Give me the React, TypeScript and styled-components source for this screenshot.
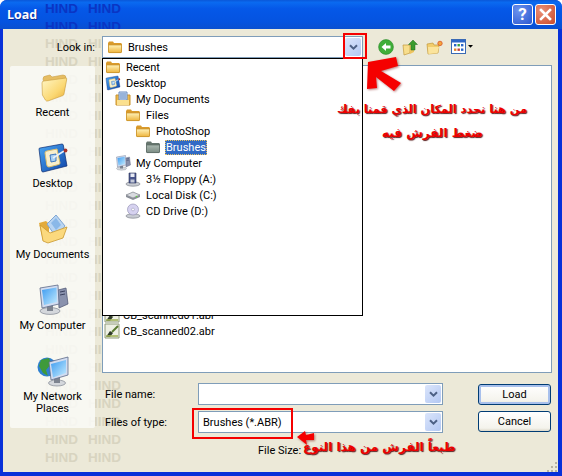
import React from 'react'
import styled, { createGlobalStyle } from 'styled-components'

const GlobalStyle = createGlobalStyle`
  html, body {
    margin: 0;
    padding: 0;
    background: #fff;
  }
  body {
    font-family: Roboto, 'Liberation Sans', Arial, sans-serif;
    font-size: 11px;
    color: #000;
  }
`

const FolderIcon = ({ size = 16, muted = false }: { size?: number; muted?: boolean }) => {
  const id = muted ? 'folderMuted' : 'folderGold'
  return (
    <svg width={size} height={size} viewBox="0 0 16 16">
      <defs>
        <linearGradient id={id} x1="0" y1="0" x2="0" y2="1">
          <stop offset="0" stopColor={muted ? '#aab8b0' : '#fff2b8'} />
          <stop offset="1" stopColor={muted ? '#7c8c84' : '#eeb53e'} />
        </linearGradient>
      </defs>
      <path d="M1 4 L2 2.5 H6 L7 4 H14 L15 5 V13 L14 14 H2 L1 13 Z" fill={muted ? '#66756e' : '#d99a2b'} />
      <path d="M1.5 6 H14.5 V13 L14 13.6 H2 L1.5 13 Z" fill={`url(#${id})`} stroke={muted ? '#5d6b65' : '#c9932e'} strokeWidth=".7" />
    </svg>
  )
}

const BigFolderIcon = () => (
  <svg width="32" height="32" viewBox="0 0 32 32">
    <defs>
      <linearGradient id="bigFolder" x1="0" y1="0" x2="1" y2="1">
        <stop offset="0" stopColor="#fff7c8" />
        <stop offset=".6" stopColor="#fbd873" />
        <stop offset="1" stopColor="#e8ab36" />
      </linearGradient>
    </defs>
    <path d="M6 8 Q6 5 9 5 L13 4 L15 6 L26 4 Q29 4 29 7 L27 20 L10 28 Z" fill="#e6bd62" stroke="#c9a048" strokeWidth=".6" />
    <path d="M5 12 Q5 10 7 10 L29 7 Q30 7 29.6 9 L27 23 Q26.8 24 26 24.5 L11 30 Q9 30.4 8.4 29 L5.4 24 Z" fill="url(#bigFolder)" stroke="#c79a3c" strokeWidth=".6" />
  </svg>
)

const DesktopIcon = ({ size = 32 }: { size?: number }) => (
  <svg width={size} height={size} viewBox="0 0 32 32">
    <defs>
      <linearGradient id={`desk${size}`} x1="0" y1="0" x2="1" y2="1">
        <stop offset="0" stopColor="#4aa8f4" />
        <stop offset="1" stopColor="#0f44a8" />
      </linearGradient>
    </defs>
    <path d="M2 7 Q2 6 3 6 L25 2 Q26 2 26.3 3 L30 24 L6 30 Q5 30 4.7 29 Z" fill={`url(#desk${size})`} stroke="#0b2a70" strokeWidth=".7" />
    <path d="M8 11 Q8 9 10 9 L20 7 L23 21 Q23 22 22 22.4 L12 25 Q10 25 9.8 23 Z" fill="#f8efcc" stroke="#dcbf6c" />
    <path d="M13 13 L19 12 L19 19 L14 20 Z" fill="#a8d0f2" stroke="#1c5fb8" strokeWidth=".8" />
    <path d="M16 16 L27 9" stroke="#e8f1fb" strokeWidth="1.5" />
    <circle cx="28.5" cy="8.5" r="1.9" fill="#a8322a" />
  </svg>
)

const DocsIcon = ({ size = 32 }: { size?: number }) => (
  <svg width={size} height={size} viewBox="0 0 32 32">
    <path d="M2 10 L9 8 L12 11 L12 26 L6 28 Z" fill="#e3ab3c" />
    <path d="M10 11 L19 2 L28 13 L19 24 Z" fill="#b9d5f2" stroke="#7fa6d4" />
    <path d="M14 10 L19 5 L24 12 L19 17 Z" fill="#8ab8e8" />
    <path d="M3 12 L13 20 L30 14 L26 25 L11 30 L6 28 Z" fill="#fbd97e" stroke="#c9982f" strokeWidth=".8" />
  </svg>
)

const SmallDocsIcon = () => (
  <svg width="16" height="16" viewBox="0 0 16 16">
    <path d="M1 4 H15 V14 H1 Z" fill="#eeb94d" stroke="#c9932e" />
    <path d="M4 1 H12 V9 H4 Z" fill="#d6e4f6" stroke="#6a8cc0" />
    <path d="M5 3 H11 M5 5 H11 M5 7 H11" stroke="#5b82bc" />
    <path d="M2 9 H14 V14 H2 Z" fill="#fbe08f" />
  </svg>
)

const ComputerIcon = ({ size = 32 }: { size?: number }) => (
  <svg width={size} height={size} viewBox="0 0 32 32">
    <defs>
      <linearGradient id={`screen${size}`} x1="0" y1="0" x2="1" y2="1">
        <stop offset="0" stopColor="#3d9bf0" />
        <stop offset="1" stopColor="#c4ecff" />
      </linearGradient>
    </defs>
    <ellipse cx="13" cy="27" rx="10" ry="3.4" fill="#d4d7dc" stroke="#7f8590" strokeWidth=".7" />
    <path d="M10 21 H16 V27 H10 Z" fill="#7d838f" />
    <path d="M21 6 L29 4 L31 20 L22 24 Z" fill="#8a92ad" stroke="#4a5170" strokeWidth=".7" />
    <path d="M23 8 L28 7 M23 11 L28 10" stroke="#39405e" />
    <path d="M3 4 L21 1 L22 20 L5 24 Z" fill="#d2dcf0" stroke="#5d6a88" strokeWidth=".8" />
    <path d="M5 6 L19.5 3.5 L20 18 L7 21 Z" fill={`url(#screen${size})`} />
  </svg>
)

const NetworkIcon = () => (
  <svg width="32" height="32" viewBox="0 0 32 32">
    <defs>
      <linearGradient id="netScreen" x1="0" y1="0" x2="1" y2="1">
        <stop offset="0" stopColor="#3d9bf0" />
        <stop offset="1" stopColor="#c4ecff" />
      </linearGradient>
    </defs>
    <circle cx="10" cy="12" r="9.5" fill="#2e80d0" />
    <path d="M4 5 L12 3 L14 9 L9 15 L11 21 L6 18 L2 11 Z" fill="#3f9a3a" />
    <ellipse cx="20" cy="28" rx="8.5" ry="3" fill="#d4d7dc" stroke="#7f8590" strokeWidth=".7" />
    <path d="M17 22 H23 V28 H17 Z" fill="#7d838f" />
    <path d="M12 7 L31 2 L31 20 L14 25 Z" fill="#d2dcf0" stroke="#5d6a88" strokeWidth=".8" />
    <path d="M14 9 L29 5 L29 18 L16 22.5 Z" fill="url(#netScreen)" />
  </svg>
)

const FloppyIcon = () => (
  <svg width="16" height="16" viewBox="0 0 16 16">
    <ellipse cx="8" cy="13" rx="7" ry="2.2" fill="#c8cbd2" stroke="#70757f" strokeWidth=".6" />
    <path d="M4 2 H11 V12 H4 Z" fill="#49558c" stroke="#2a3258" strokeWidth=".6" />
    <path d="M5.5 2.5 H9.5 V6 H5.5 Z" fill="#e8ebf4" />
    <path d="M5.5 8.5 H9.5 V11.5 H5.5 Z" fill="#c4c9d8" />
  </svg>
)

const DiskIcon = () => (
  <svg width="16" height="16" viewBox="0 0 16 16">
    <path d="M1 8 L8 5 L15 8 L8 11 Z" fill="#d9dbe0" stroke="#6c7079" strokeWidth=".6" />
    <path d="M1 8 V10 L8 13 L15 10 V8 L8 11 Z" fill="#8a8e97" />
    <circle cx="11.5" cy="9.6" r=".8" fill="#60d040" />
  </svg>
)

const CdIcon = () => (
  <svg width="16" height="16" viewBox="0 0 16 16">
    <ellipse cx="8" cy="13" rx="7" ry="2.2" fill="#c8cbd2" stroke="#70757f" strokeWidth=".6" />
    <circle cx="8" cy="6.5" r="5.5" fill="#d6d2f0" stroke="#8b88ad" strokeWidth=".6" />
    <circle cx="8" cy="6.5" r="1.4" fill="#fff" stroke="#8b88ad" strokeWidth=".5" />
  </svg>
)

const BrushFileIcon = () => (
  <svg width="16" height="16" viewBox="0 0 16 16">
    <path d="M1 1 H15 V15 H1 Z" fill="#eef0e4" stroke="#8e9a78" />
    <path d="M2 14 L6 8 L9 10 L6 14 Z" fill="#2e3a28" />
    <path d="M8 9 L14 3" stroke="#5a7a30" strokeWidth="2" />
    <path d="M2 12 H14 V14 H2 Z" fill="#a3b45a" opacity=".8" />
  </svg>
)

const ComboArrow = () => (
  <svg width="9" height="7" viewBox="0 0 9 7">
    <path d="M1 1.2 L4.5 4.6 L8 1.2" fill="none" stroke="#4d6185" strokeWidth="2" />
  </svg>
)

const BackIcon = () => (
  <svg width="16" height="16" viewBox="0 0 16 16">
    <circle cx="8" cy="8" r="7.4" fill="#3fae38" stroke="#2c8a2a" strokeWidth=".6" />
    <path d="M3.5 8 L8 4 V6.5 H12.5 V9.5 H8 V12 Z" fill="#fff" />
  </svg>
)

const UpIcon = () => (
  <svg width="16" height="17" viewBox="0 0 16 17">
    <path d="M1 6 H8 V14 L2 16 Z" fill="#f8de8c" stroke="#c39a3e" strokeWidth=".7" />
    <path d="M8 6 L12 5 V13 L8 15 Z" fill="#eec45f" />
    <path d="M11 1 L15.5 5.5 H13 V11 H9 V5.5 H6.5 Z" fill="#3a9b2e" stroke="#1f6d1c" strokeWidth=".5" />
  </svg>
)

const NewFolderIcon = () => (
  <svg width="17" height="15" viewBox="0 0 17 15">
    <path d="M1 4 L7 3 L8 5 H13 L12 13 L2 14 Z" fill="#f2cd6c" stroke="#c39a3e" strokeWidth=".7" />
    <path d="M2 7 H13 L11.5 13 L2.5 14 Z" fill="#fbe49c" />
    <circle cx="14" cy="3.4" r="2.2" fill="#f4a63a" stroke="#d8542a" strokeWidth=".8" />
  </svg>
)

const ViewsIcon = () => (
  <svg width="23" height="16" viewBox="0 0 23 16">
    <rect x=".5" y=".5" width="14" height="14" fill="#fff" stroke="#3a6ab4" />
    <rect x="1" y="1" width="13" height="2.5" fill="#2f68c8" />
    <rect x="3" y="5" width="2.4" height="2.4" fill="#2a66c8" />
    <rect x="6.5" y="5" width="2.4" height="2.4" fill="#3aa040" />
    <rect x="10" y="5" width="2.4" height="2.4" fill="#2a66c8" />
    <rect x="3" y="9.5" width="2.4" height="2.4" fill="#e0862a" />
    <rect x="6.5" y="9.5" width="2.4" height="2.4" fill="#c84038" />
    <rect x="10" y="9.5" width="2.4" height="2.4" fill="#2a66c8" />
    <path d="M17 6 H22 L19.5 8.8 Z" fill="#000" />
  </svg>
)

const HINDS = Array.from({ length: 52 })

const Watermark = ({ rows, tone }: { rows: number; tone: 'title' | 'body' }) => (
  <S.Watermark $tone={tone}>
    {HINDS.slice(0, rows * 2).map((_, i) => (
      <span key={i}>HIND</span>
    ))}
  </S.Watermark>
)

const places = [
  { label: 'Recent', icon: <BigFolderIcon /> },
  { label: 'Desktop', icon: <DesktopIcon /> },
  { label: 'My Documents', icon: <DocsIcon /> },
  { label: 'My Computer', icon: <ComputerIcon /> },
  { label: 'My Network Places', icon: <NetworkIcon /> }
]

const tree = [
  { label: 'Recent', depth: 0, icon: <FolderIcon /> },
  { label: 'Desktop', depth: 0, icon: <DesktopIcon size={16} /> },
  { label: 'My Documents', depth: 1, icon: <SmallDocsIcon /> },
  { label: 'Files', depth: 2, icon: <FolderIcon /> },
  { label: 'PhotoShop', depth: 3, icon: <FolderIcon /> },
  { label: 'Brushes', depth: 4, icon: <FolderIcon muted />, selected: true },
  { label: 'My Computer', depth: 1, icon: <ComputerIcon size={16} /> },
  { label: '3½ Floppy (A:)', depth: 2, icon: <FloppyIcon /> },
  { label: 'Local Disk (C:)', depth: 2, icon: <DiskIcon /> },
  { label: 'CD Drive (D:)', depth: 2, icon: <CdIcon /> }
]

export default function App() {
  return (
    <S.Window>
      <GlobalStyle />
      <S.TitleBar>
        <Watermark rows={2} tone="title" />
        <S.Title>Load</S.Title>
        <S.TitleButtons>
          <S.HelpButton>?</S.HelpButton>
          <S.CloseButton>
            <svg width="13" height="13" viewBox="0 0 13 13">
              <path d="M2 2 L11 11 M11 2 L2 11" stroke="#fff" strokeWidth="2.6" strokeLinecap="square" />
            </svg>
          </S.CloseButton>
        </S.TitleButtons>
      </S.TitleBar>

      <S.Body>
        <Watermark rows={24} tone="body" />
        <S.TopRow>
          <S.LookInLabel>Look in:</S.LookInLabel>
          <S.Combo $width={261}>
            <FolderIcon />
            <span>Brushes</span>
            <S.ComboButton>
              <ComboArrow />
            </S.ComboButton>
          </S.Combo>
          <S.Toolbar>
            <BackIcon />
            <UpIcon />
            <NewFolderIcon />
            <ViewsIcon />
          </S.Toolbar>
        </S.TopRow>

        <S.Middle>
          <S.Places>
            {places.map(place => (
              <S.Place key={place.label}>
                {place.icon}
                <span>{place.label}</span>
              </S.Place>
            ))}
          </S.Places>

          <S.RightColumn>
            <S.FileList>
              <S.FileRow>
                <BrushFileIcon />
                <span>CB_scanned01.abr</span>
              </S.FileRow>
              <S.FileRow>
                <BrushFileIcon />
                <span>CB_scanned02.abr</span>
              </S.FileRow>
            </S.FileList>

            <S.FormRows>
              <S.Fields>
                <S.FieldRow>
                  <S.FieldLabel>File name:</S.FieldLabel>
                  <S.Combo $width={245}>
                    <S.ComboButton>
                      <ComboArrow />
                    </S.ComboButton>
                  </S.Combo>
                </S.FieldRow>
                <S.FieldRow>
                  <S.FieldLabel>Files of type:</S.FieldLabel>
                  <S.Combo $width={245}>
                    <span>Brushes (*.ABR)</span>
                    <S.ComboButton>
                      <ComboArrow />
                    </S.ComboButton>
                  </S.Combo>
                </S.FieldRow>
                <S.FileSize>File Size:</S.FileSize>
              </S.Fields>
              <S.Buttons>
                <S.DialogButton $primary>Load</S.DialogButton>
                <S.DialogButton>Cancel</S.DialogButton>
              </S.Buttons>
            </S.FormRows>
          </S.RightColumn>
        </S.Middle>

        <S.Dropdown>
          {tree.map(item => (
            <S.TreeRow key={item.label} $depth={item.depth}>
              {item.icon}
              <S.TreeLabel $selected={item.selected}>{item.label}</S.TreeLabel>
            </S.TreeRow>
          ))}
        </S.Dropdown>

        <S.Grip>
          <svg width="11" height="11" viewBox="0 0 11 11">
            <path d="M8 1 h2 v2 h-2 z M4 5 h2 v2 h-2 z M8 5 h2 v2 h-2 z M0 9 h2 v2 h-2 z M4 9 h2 v2 h-2 z M8 9 h2 v2 h-2 z" fill="#b8b4a0" />
          </svg>
        </S.Grip>
      </S.Body>

      <S.RedBox $left={343} $top={33} $width={24} $height={26} />
      <S.RedBox $left={192} $top={408} $width={101} $height={31} />
      <S.RedArrow width="45" height="40" viewBox="0 0 45 40" $left={360} $top={55}>
        <polygon points="36,2 38,11 21,16 41,28 34,36 16,22 17,33 7,34 8,7" fill="#f50000" />
      </S.RedArrow>
      <S.RedArrow width="20" height="18" viewBox="0 0 20 18" $left={296} $top={429}>
        <polygon points="1,8 9,2 10,6 18,4 18,11 10,11 11,16" fill="#f50000" />
      </S.RedArrow>
      <S.Note $left={337} $top={101} $size={11.3}>من هنا نحدد المكان الذي قمنا بفك</S.Note>
      <S.Note $left={382} $top={124} $size={12}>ضغط الفرش فيه</S.Note>
      <S.Note $left={303} $top={438} $size={12}>طبعاً الفرش من هذا النوع</S.Note>
    </S.Window>
  )
}

const S = {
  Window: styled.div`
    position: relative;
    width: 562px;
    height: 476px;
    overflow: hidden;
    display: flex;
    flex-direction: column;
    background: #0831d9;
    border-radius: 7px 7px 0 0;
  `,
  TitleBar: styled.div`
    position: relative;
    flex: 0 0 29px;
    display: flex;
    align-items: center;
    justify-content: space-between;
    padding: 0 6px 0 7px;
    overflow: hidden;
    background: linear-gradient(180deg, #0a57d8 0%, #0a6af0 8%, #0558e8 30%, #0553e0 75%, #0a4fd0 100%);
  `,
  Title: styled.div`
    position: relative;
    color: #fff;
    font-size: 12.5px;
    font-weight: bold;
    font-family: 'Open Sans', 'Liberation Sans', sans-serif;
    text-shadow: 1px 1px 0 #0b2a90;
  `,
  TitleButtons: styled.div`
    position: relative;
    display: flex;
    gap: 2px;
  `,
  HelpButton: styled.div`
    width: 21px;
    height: 21px;
    box-sizing: border-box;
    border: 1px solid #fff;
    border-radius: 3px;
    background: radial-gradient(circle at 30% 30%, #6c93ee, #2a57d0);
    color: #fff;
    font-size: 17px;
    font-weight: bold;
    line-height: 19px;
    text-align: center;
  `,
  CloseButton: styled.div`
    width: 21px;
    height: 21px;
    box-sizing: border-box;
    border: 1px solid #fff;
    border-radius: 3px;
    background: radial-gradient(circle at 30% 30%, #ea9078, #cc4a28);
    display: flex;
    align-items: center;
    justify-content: center;
  `,
  Watermark: styled.div<{ $tone: 'title' | 'body' }>`
    position: absolute;
    left: ${p => (p.$tone === 'title' ? '45px' : '42px')};
    top: ${p => (p.$tone === 'title' ? '0' : '6px')};
    display: grid;
    grid-template-columns: 43px 43px;
    grid-auto-rows: 18px;
    font-family: 'Liberation Sans', sans-serif;
    font-size: 13.5px;
    font-weight: bold;
    line-height: 18px;
    color: ${p => (p.$tone === 'title' ? '#0a35c4' : '#d8d4c0')};
  `,
  Body: styled.div`
    position: relative;
    flex: 1;
    margin: 0 4px 4px 3px;
    padding: 7px 6px 0 7px;
    overflow: hidden;
    background: #ece9d8;
    display: flex;
    flex-direction: column;
    gap: 7px;
  `,
  TopRow: styled.div`
    position: relative;
    display: flex;
    align-items: center;
    height: 22px;
  `,
  LookInLabel: styled.div`
    width: 92px;
    padding-right: 7px;
    box-sizing: border-box;
    text-align: right;
  `,
  Combo: styled.div<{ $width: number }>`
    position: relative;
    width: ${p => p.$width}px;
    height: 22px;
    box-sizing: border-box;
    display: flex;
    align-items: center;
    gap: 5px;
    padding: 0 20px 0 4px;
    background: #fff;
    border: 1px solid #7f9db9;
  `,
  ComboButton: styled.div`
    position: absolute;
    right: 1px;
    top: 1px;
    bottom: 1px;
    width: 16px;
    display: flex;
    align-items: center;
    justify-content: center;
    background: linear-gradient(135deg, #dbe5fb, #b3c8f3);
    border-radius: 2px;
  `,
  Toolbar: styled.div`
    display: flex;
    align-items: center;
    gap: 8px;
    margin-left: 15px;
  `,
  Middle: styled.div`
    flex: 1;
    display: flex;
    gap: 7px;
  `,
  Places: styled.div`
    position: relative;
    width: 85px;
    height: 362px;
    margin-top: 1px;
    box-sizing: border-box;
    padding-top: 4px;
    background: rgba(250, 250, 247, 0.85);
    border-radius: 2px;
  `,
  Place: styled.div`
    height: 71px;
    display: flex;
    flex-direction: column;
    align-items: center;
    text-align: center;
    box-sizing: border-box;
    padding-top: 1px;
    line-height: 12px;
    gap: 4px;
    span {
      display: block;
      width: 85px;
    }
    &:last-child span {
      padding: 0 8px;
      box-sizing: border-box;
    }
  `,
  RightColumn: styled.div`
    position: relative;
    display: flex;
    flex-direction: column;
    width: 450px;
  `,
  FileList: styled.div`
    height: 308px;
    box-sizing: border-box;
    display: flex;
    flex-direction: column;
    justify-content: flex-end;
    padding: 0 0 33px 1px;
    background: #fff;
    border: 1px solid #7f9db9;
  `,
  FileRow: styled.div`
    height: 16px;
    display: flex;
    align-items: center;
    gap: 3px;
  `,
  FormRows: styled.div`
    display: flex;
    margin-top: 10px;
  `,
  Fields: styled.div`
    display: flex;
    flex-direction: column;
    gap: 6px;
    width: 376px;
  `,
  FieldRow: styled.div`
    display: flex;
    align-items: center;
    height: 22px;
  `,
  FieldLabel: styled.div`
    width: 96px;
    padding-left: 3px;
    box-sizing: border-box;
  `,
  FileSize: styled.div`
    padding-left: 156px;
    margin-top: 5px;
  `,
  Buttons: styled.div`
    display: flex;
    flex-direction: column;
    gap: 6px;
    padding-top: 1px;
  `,
  DialogButton: styled.div<{ $primary?: boolean }>`
    width: 73px;
    height: 21px;
    box-sizing: border-box;
    display: flex;
    align-items: center;
    justify-content: center;
    border: 1px solid #003c74;
    border-radius: 3px;
    background: linear-gradient(180deg, #fff, #f4f3ec 85%, #dcd8c8);
    box-shadow: ${p => (p.$primary ? 'inset 0 0 0 2px #a8c0ec' : 'none')};
  `,
  Dropdown: styled.div`
    position: absolute;
    left: 99px;
    top: 29px;
    width: 261px;
    height: 258px;
    box-sizing: border-box;
    background: #fff;
    border: 1px solid #000;
  `,
  TreeRow: styled.div<{ $depth: number }>`
    height: 16px;
    display: flex;
    align-items: center;
    gap: 4px;
    padding-left: ${p => 2 + p.$depth * 10}px;
  `,
  TreeLabel: styled.span<{ $selected?: boolean }>`
    padding: 0 1px;
    line-height: 15px;
    color: ${p => (p.$selected ? '#fff' : '#000')};
    background: ${p => (p.$selected ? '#316ac5' : 'transparent')};
    outline: ${p => (p.$selected ? '1px dotted #e8c060' : 'none')};
    outline-offset: -1px;
  `,
  Grip: styled.div`
    position: absolute;
    right: 0;
    bottom: 0;
    width: 11px;
    height: 11px;
    line-height: 0;
  `,
  RedBox: styled.div<{ $left: number; $top: number; $width: number; $height: number }>`
    position: absolute;
    left: ${p => p.$left}px;
    top: ${p => p.$top}px;
    width: ${p => p.$width}px;
    height: ${p => p.$height}px;
    box-sizing: border-box;
    border: 2px solid #f50000;
  `,
  RedArrow: styled.svg<{ $left: number; $top: number }>`
    position: absolute;
    left: ${p => p.$left}px;
    top: ${p => p.$top}px;
    filter: drop-shadow(1px 1px 1px rgba(120, 0, 0, 0.5));
  `,
  Note: styled.div<{ $left: number; $top: number; $size: number }>`
    position: absolute;
    left: ${p => p.$left}px;
    top: ${p => p.$top}px;
    direction: rtl;
    white-space: nowrap;
    font-family: 'DejaVu Sans', sans-serif;
    font-size: ${p => p.$size}px;
    font-weight: bold;
    line-height: 18px;
    color: #ee0000;
    text-shadow: 1px 1px 1px #5a2020;
  `
}
